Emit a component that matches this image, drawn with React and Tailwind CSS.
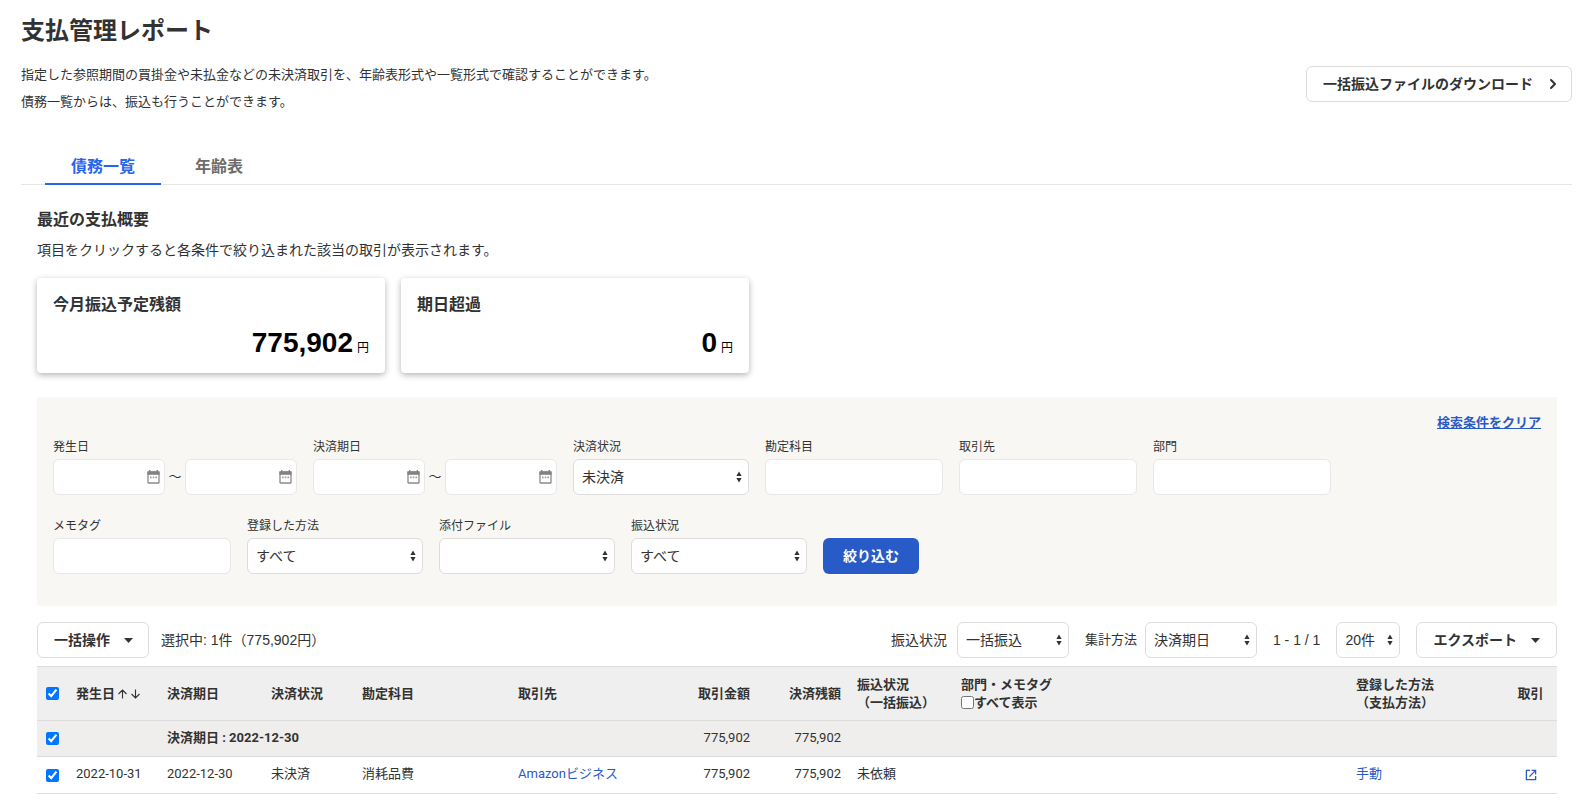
import { useState } from "react";
import { ChevronRight } from "lucide-react";

const SELECT_BASE =
  "h-9 appearance-none rounded-md border border-[#dcdcdc] bg-white pl-2 pr-5 text-sm text-[#323232]";
const INPUT_BASE = "h-9 rounded-md border border-[#e9e7e7] bg-white px-2 text-sm";
const OUTLINE_BUTTON =
  "flex h-9 items-center rounded-md border border-[#dcdcdc] bg-white pl-4 text-sm font-bold";

const SUMMARY = [
  { title: "今月振込予定残額", amount: "775,902" },
  { title: "期日超過", amount: "0" },
];

function CalendarIcon() {
  return (
    <svg
      viewBox="0 0 13 14"
      className="pointer-events-none absolute right-[5px] top-[11px] h-[14px] w-[13px]"
    >
      <path d="M2 0h1.4v2H2zM9.6 0H11v2H9.6z" fill="#828282" />
      <rect x="1" y="2" width="11" height="11" rx="0.6" fill="#fff" stroke="#8c8c8c" strokeWidth="1.3" />
      <path d="M0.4 1.4h12.2v3.4H0.4z" fill="#828282" />
      <path d="M3 6.4h1.6v1.8H3zM5.7 6.4h1.6v1.8H5.7zM8.4 6.4H10v1.8H8.4z" fill="#a0a0a0" />
    </svg>
  );
}

function SortArrows() {
  return (
    <svg
      viewBox="0 0 6 12"
      className="pointer-events-none absolute right-[7px] top-3 h-3 w-[6px]"
      fill="#323232"
    >
      <path d="M3 0.5L5.6 5H0.4zM3 11.5L0.4 7h5.2z" />
    </svg>
  );
}

function Caret() {
  return (
    <svg viewBox="0 0 9 5" className="h-[5px] w-[9px]" fill="#323232">
      <path d="M0 0h9L4.5 5z" />
    </svg>
  );
}

function ExternalIcon() {
  return (
    <svg viewBox="0 0 12 12" className="h-3 w-3" fill="none" stroke="#285ac8" strokeWidth="1.3">
      <path d="M5 1.4H1.4v9.2h9.2V7" />
      <path d="M6.6 1.4h4v4M10.4 1.6L4.4 7.6" />
    </svg>
  );
}

function Select({ id, options, width, label }) {
  return (
    <div className="relative">
      <select id={id} aria-label={label} className={`${SELECT_BASE} ${width}`}>
        {options.map((o) => (
          <option key={o}>{o}</option>
        ))}
      </select>
      <SortArrows />
    </div>
  );
}

function Field({ id, label, children }) {
  return (
    <div>
      <label htmlFor={id} className="mb-[2px] block text-xs leading-5">
        {label}
      </label>
      {children}
    </div>
  );
}

function TextField({ id, label }) {
  return (
    <Field id={id} label={label}>
      <input id={id} type="text" className={`${INPUT_BASE} w-[178px]`} />
    </Field>
  );
}

function SelectField({ id, label, options }) {
  return (
    <Field id={id} label={label}>
      <Select id={id} options={options} width="w-44" />
    </Field>
  );
}

function DateInput({ id, label }) {
  return (
    <div className="relative">
      <input id={id} aria-label={label} type="text" className={`${INPUT_BASE} w-28`} />
      <CalendarIcon />
    </div>
  );
}

function DateRange({ id, label }) {
  return (
    <Field id={id} label={label}>
      <div className="flex items-center">
        <DateInput id={id} />
        <span className="w-5 text-center text-[13px]">～</span>
        <DateInput id={`${id}-to`} label={`${label}（終了）`} />
      </div>
    </Field>
  );
}

function Check({ label, checked, onChange }) {
  return (
    <input
      type="checkbox"
      aria-label={label}
      checked={checked}
      onChange={onChange}
      className="ml-px block h-[13px] w-[13px]"
    />
  );
}

function Filters() {
  return (
    <section className="mt-6 bg-[#f8f7f3] px-4 pb-8 pt-4">
      <div className="flex justify-end text-[13px] font-bold leading-5">
        <a href="#clear" className="text-[#285ac8] underline">
          検索条件をクリア
        </a>
      </div>
      <div className="mt-1 flex flex-wrap gap-4">
        <DateRange id="issue" label="発生日" />
        <DateRange id="due" label="決済期日" />
        <SelectField id="status" label="決済状況" options={["未決済"]} />
        <TextField id="account" label="勘定科目" />
        <TextField id="partner" label="取引先" />
        <TextField id="section" label="部門" />
      </div>
      <div className="mt-[21px] flex flex-wrap items-end gap-4">
        <TextField id="tag" label="メモタグ" />
        <SelectField id="method" label="登録した方法" options={["すべて"]} />
        <SelectField id="attachment" label="添付ファイル" options={[""]} />
        <SelectField id="transfer" label="振込状況" options={["すべて"]} />
        <button className="h-9 w-24 rounded-md bg-[#285ac8] text-sm font-bold text-white">
          絞り込む
        </button>
      </div>
    </section>
  );
}

function Toolbar() {
  return (
    <div className="mt-4 flex flex-wrap items-center justify-between text-sm">
      <div className="flex items-center gap-3">
        <button className={`${OUTLINE_BUTTON} w-28 gap-[14px]`}>
          一括操作
          <Caret />
        </button>
        <span>選択中: 1件（775,902円）</span>
      </div>
      <div className="flex items-center">
        <label htmlFor="bulk">振込状況</label>
        <div className="ml-[10px] mr-4">
          <Select id="bulk" options={["一括振込"]} width="w-28" />
        </div>
        <label htmlFor="group" className="text-[13px]">
          集計方法
        </label>
        <div className="ml-2 mr-4">
          <Select id="group" options={["決済期日"]} width="w-28" />
        </div>
        <span>1 - 1 / 1</span>
        <div className="mx-4">
          <Select label="表示件数" options={["20件"]} width="w-16" />
        </div>
        <button className={`${OUTLINE_BUTTON} gap-[14px] pr-4`}>
          エクスポート
          <Caret />
        </button>
      </div>
    </div>
  );
}

function DebtTable() {
  const [selected, setSelected] = useState(true);
  const [showAll, setShowAll] = useState(false);
  const toggle = () => setSelected(!selected);

  return (
    <table className="mt-2 w-full table-fixed border-b border-[#dcdcdc] text-left font-['Roboto','Noto_Sans_CJK_JP',sans-serif] text-[13px] leading-[18px] [&_td]:px-2 [&_td:not(:first-child):not(:last-child)]:pb-[2px] [&_th]:px-2">
      <colgroup>
        <col className="w-[31px]" />
        <col className="w-[91px]" />
        <col className="w-[104px]" />
        <col className="w-[91px]" />
        <col className="w-[156px]" />
        <col className="w-[157px]" />
        <col className="w-[91px]" />
        <col className="w-[91px]" />
        <col className="w-[104px]" />
        <col />
        <col className="w-[156px]" />
        <col className="w-[53px]" />
      </colgroup>
      <thead>
        <tr className="h-[54px] border-t border-[#dcdcdc] bg-[#efefef]">
          <th>
            <Check label="すべて選択" checked={selected} onChange={toggle} />
          </th>
          <th>
            <span className="flex items-center gap-[2px] whitespace-nowrap">
              発生日
              <svg viewBox="0 0 24 10" className="h-[10px] w-6" fill="none" stroke="#323232" strokeWidth="1.1">
                <path d="M5.5 9.5V1.2M1.5 5L5.5 1l4 4M18.5 0.5v8.3M14.5 5l4 4 4-4" />
              </svg>
            </span>
          </th>
          <th>決済期日</th>
          <th>決済状況</th>
          <th>勘定科目</th>
          <th>取引先</th>
          <th className="text-right">取引金額</th>
          <th className="text-right">決済残額</th>
          <th className="whitespace-nowrap">
            振込状況
            <br />
            （一括振込）
          </th>
          <th>
            部門・メモタグ
            <label className="flex items-center">
              <input
                type="checkbox"
                checked={showAll}
                onChange={() => setShowAll(!showAll)}
                className="h-[13px] w-[13px]"
              />
              すべて表示
            </label>
          </th>
          <th>
            登録した方法
            <br />
            （支払方法）
          </th>
          <th className="text-center">取引</th>
        </tr>
      </thead>
      <tbody>
        <tr className="h-9 border-t border-[#dcdcdc] bg-[#efeeec]">
          <td>
            <Check label="決済期日 2022-12-30 を選択" checked={selected} onChange={toggle} />
          </td>
          <td />
          <td colSpan={4} className="font-bold">
            決済期日 : 2022-12-30
          </td>
          <td className="text-right">775,902</td>
          <td className="text-right">775,902</td>
          <td colSpan={4} />
        </tr>
        <tr className="h-[37px] border-t border-[#dcdcdc]">
          <td>
            <Check label="取引を選択" checked={selected} onChange={toggle} />
          </td>
          <td>2022-10-31</td>
          <td>2022-12-30</td>
          <td>未決済</td>
          <td>消耗品費</td>
          <td>
            <a href="#partner" className="text-[#285ac8]">
              Amazonビジネス
            </a>
          </td>
          <td className="text-right">775,902</td>
          <td className="text-right">775,902</td>
          <td>未依頼</td>
          <td />
          <td>
            <a href="#manual" className="text-[#285ac8]">
              手動
            </a>
          </td>
          <td>
            <a href="#detail" aria-label="取引を開く" className="flex justify-center">
              <ExternalIcon />
            </a>
          </td>
        </tr>
      </tbody>
    </table>
  );
}

export default function App() {
  const [tab, setTab] = useState("list");

  return (
    <main className="min-h-screen overflow-hidden bg-white pb-4 pl-[21px] pr-[5px] font-['Liberation_Sans','Noto_Sans_CJK_JP',sans-serif] text-[#323232]">
      <header className="flex items-end justify-between">
        <div>
          <h1 className="mt-[13px] text-2xl font-bold leading-9">支払管理レポート</h1>
          <p className="mt-3 text-[13px] leading-[27px]">
            指定した参照期間の買掛金や未払金などの未決済取引を、年齢表形式や一覧形式で確認することができます。
            <br />
            債務一覧からは、振込も行うことができます。
          </p>
        </div>
        <button className={`${OUTLINE_BUTTON} mb-[13px] gap-3 pr-[10px]`}>
          一括振込ファイルのダウンロード
          <ChevronRight size={16} strokeWidth={3} />
        </button>
      </header>

      <nav className="mt-9 flex gap-2 border-b border-[#e6e6e6] pl-6 font-bold">
        <button
          onClick={() => setTab("list")}
          className={`-mb-px border-b-2 px-[26px] leading-8 ${
            tab === "list" ? "border-[#2864f0] text-[#2864f0]" : "border-transparent text-[#6e6b6b]"
          }`}
        >
          債務一覧
        </button>
        <button
          onClick={() => setTab("aging")}
          className={`-mb-px border-b-2 px-[26px] leading-8 ${
            tab === "aging" ? "border-[#2864f0] text-[#2864f0]" : "border-transparent text-[#6e6b6b]"
          }`}
        >
          年齢表
        </button>
      </nav>

      <div className="pl-4 pr-[15px] pt-[23px]">
        <h2 className="font-bold leading-6">最近の支払概要</h2>
        <p className="mt-[6px] text-sm leading-6">
          項目をクリックすると各条件で絞り込まれた該当の取引が表示されます。
        </p>

        <div className="mt-4 flex gap-4">
          {SUMMARY.map((item) => (
            <button
              key={item.title}
              className="w-[348px] rounded bg-white px-4 pb-3 pt-[15px] text-left shadow-[0_2px_6px_rgba(0,0,0,0.3)]"
            >
              <span className="block font-bold leading-6">{item.title}</span>
              <span className="mt-2 flex items-baseline justify-end gap-1 text-black">
                <span className="text-[28px] font-bold leading-9">{item.amount}</span>
                <span className="text-xs">円</span>
              </span>
            </button>
          ))}
        </div>

        <Filters />
        <Toolbar />
        <DebtTable />
      </div>
    </main>
  );
}
